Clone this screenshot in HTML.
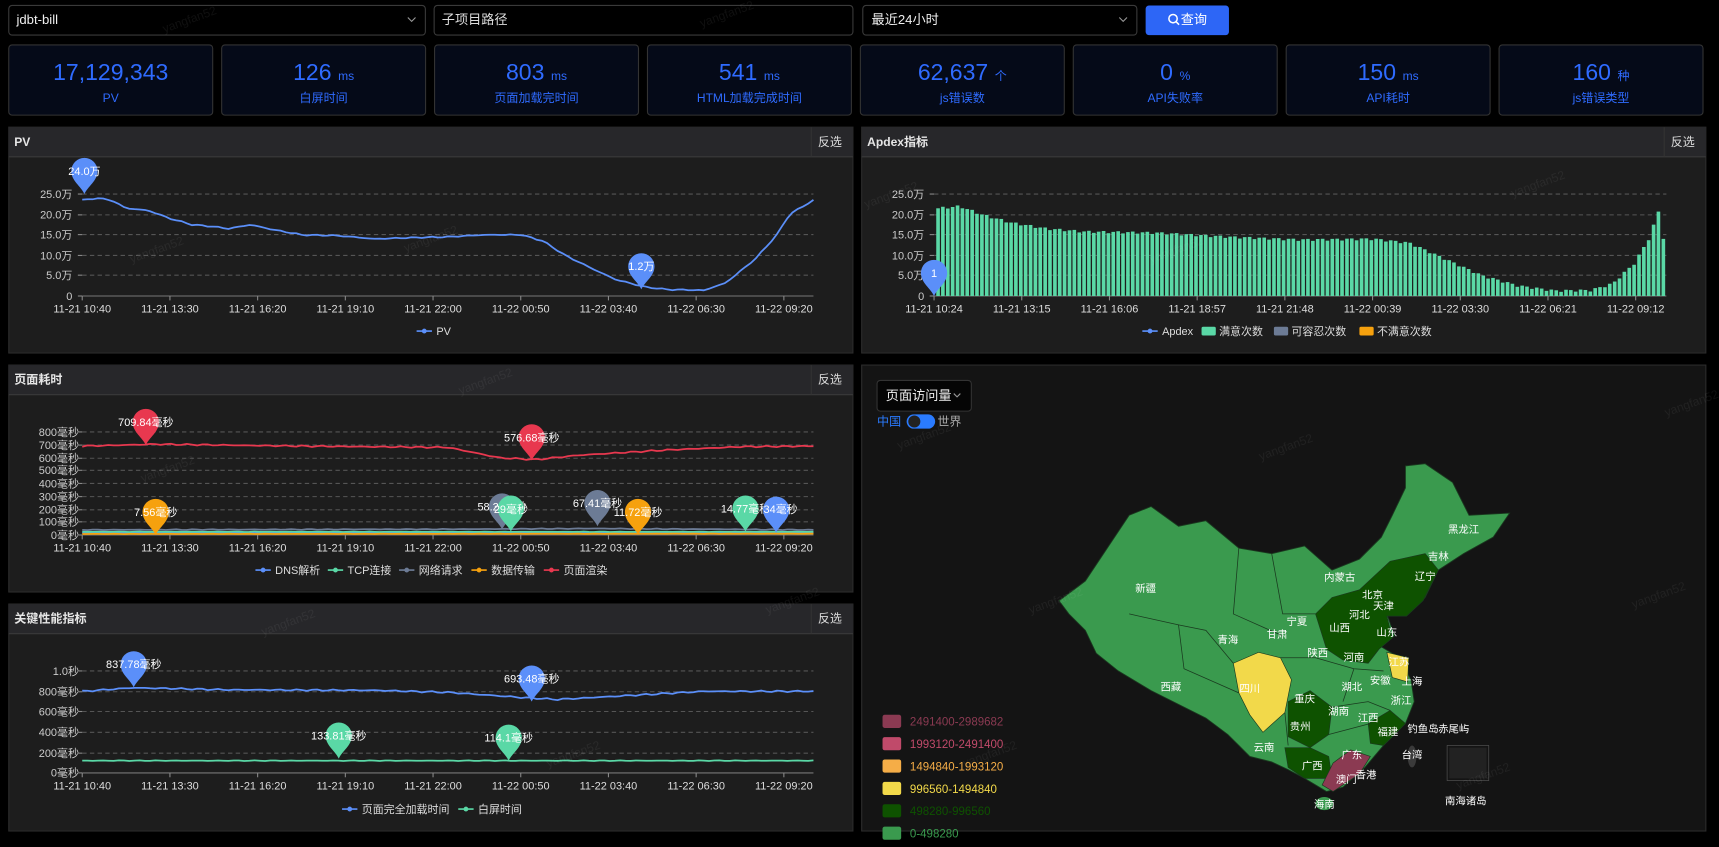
<!DOCTYPE html>
<html><head><meta charset="utf-8"><style>
html,body{margin:0;padding:0;background:#000;width:1719px;height:847px;overflow:hidden}
svg{display:block;font-family:"Liberation Sans","Noto Sans CJK SC",sans-serif}
</style></head><body>
<svg id="s" width="1719" height="847" viewBox="0 0 1568 772.6" xmlns="http://www.w3.org/2000/svg">
<rect width="1568" height="773" fill="#000"/>
<rect x="8" y="5" width="380" height="27" rx="3" fill="#000" stroke="#3a3a3a"/>
<text x="15" y="22" font-size="12" fill="#eee">jdbt-bill</text>
<path d="M372 16l3.5 3.5 3.5-3.5" stroke="#999" fill="none"/>
<rect x="396" y="5" width="382" height="27" rx="3" fill="#000" stroke="#3a3a3a"/>
<text x="403" y="22" font-size="12" fill="#ddd">子项目路径</text>
<rect x="787" y="5" width="250" height="27" rx="3" fill="#000" stroke="#3a3a3a"/>
<text x="795" y="22" font-size="12" fill="#eee">最近24小时</text>
<path d="M1021 16l3.5 3.5 3.5-3.5" stroke="#999" fill="none"/>
<rect x="1045" y="5" width="76" height="27" rx="3" fill="#2d66f6"/>
<circle cx="1070" cy="17" r="3.8" stroke="#fff" stroke-width="1.4" fill="none"/>
<path d="M1073 20l2.5 2.5" stroke="#fff" stroke-width="1.4"/>
<text x="1077" y="22" font-size="12" fill="#fff">查询</text>
<g id="cards"></g>
<g id="panels"></g>
<g id="charts"></g>
<g id="map"></g>
<g id="wm" font-size="11" fill="#ffffff" fill-opacity="0.06"></g>
</svg>
<script>
const NS="http://www.w3.org/2000/svg";
function el(p,tag,a,txt){const e=document.createElementNS(NS,tag);for(const k in a)e.setAttribute(k,a[k]);if(txt!=null)e.textContent=txt;document.getElementById(p).appendChild(e);return e;}
const cards=[["17,129,343","","PV"],["126","ms","白屏时间"],["803","ms","页面加载完时间"],["541","ms","HTML加载完成时间"],["62,637","个","js错误数"],["0","%","API失败率"],["150","ms","API耗时"],["160","种","js错误类型"]];
cards.forEach((c,i)=>{const x=8+i*194.2;el("cards","rect",{x:x,y:41,width:186,height:64,rx:3,fill:"#050a18",stroke:"#333"});
const t=el("cards","text",{x:x+93,y:73,"text-anchor":"middle",fill:"#2f6bff","font-size":21});
t.innerHTML=c[0]+(c[1]?'<tspan font-size="11" dx="6">'+c[1]+'</tspan>':'');
el("cards","text",{x:x+93,y:93,"text-anchor":"middle",fill:"#2f6bff","font-size":11},c[2]);});
function panel(x,y,w,h,title){el("panels","rect",{x:x,y:y,width:w,height:h,fill:"#1d1d1d",stroke:"#2c2c2c"});
el("panels","rect",{x:x,y:y,width:w,height:27,fill:"#27272a"});
el("panels","line",{x1:x,x2:x+w,y1:y+27,y2:y+27,stroke:"#3a3a3a"});
el("panels","line",{x1:x+w-38,x2:x+w-38,y1:y,y2:y+27,stroke:"#333"});
el("panels","text",{x:x+5,y:y+17,"font-size":11,"font-weight":"bold",fill:"#e6e6e6"},title);
el("panels","text",{x:x+w-32,y:y+17,"font-size":11,fill:"#ddd"},"反选");}
panel(8,116,770,206,"PV");panel(786,116,770,206,"Apdex指标");panel(8,333,770,207,"页面耗时");panel(8,551,770,207,"关键性能指标");
el("panels","rect",{x:786,y:333,width:770,height:425,fill:"#141414",stroke:"#2c2c2c"});
function interp(k,t){for(let i=0;i<k.length-1;i++){if(t<=k[i+1][0]){const a=k[i],b=k[i+1];return a[1]+(b[1]-a[1])*(t-a[0])/(b[0]-a[0]);}}return k[k.length-1][1];}
function grid(x0,x1,ys,labels,lx){ys.forEach((y,i)=>{if(i<ys.length-1)el("charts","line",{x1:x0,x2:x1,y1:y,y2:y,stroke:"#555","stroke-dasharray":"4 3"});
el("charts","text",{x:lx,y:y+3.5,"text-anchor":"end","font-size":10,fill:"#ccc"},labels[i]);
el("charts","line",{x1:x0-4,x2:x0,y1:y,y2:y,stroke:"#888"});});
el("charts","line",{x1:x0,x2:x1,y1:ys[ys.length-1],y2:ys[ys.length-1],stroke:"#777"});}
function xlabels(x0,y,labs){labs.forEach((l,i)=>{const x=x0+i*80;el("charts","line",{x1:x,x2:x,y1:y-15,y2:y-11,stroke:"#888"});el("charts","text",{x:x,y:y,"text-anchor":"middle","font-size":10,fill:"#ddd"},l);});}
function line(x0,x1,y0,scale,keys,color,noise,seed){let d="";const n=140;for(let i=0;i<=n;i++){const t=i/n;let v=interp(keys,t)+noise*(Math.sin(i*1.7+seed)*0.6+Math.sin(i*4.3+seed*2)*0.4);const x=x0+t*(x1-x0),y=y0-v*scale;d+=(i?"L":"M")+x.toFixed(1)+" "+y.toFixed(1);}
el("charts","path",{d:d,fill:"none",stroke:color,"stroke-width":1.6});}
function pin(cx,cy,color,label){const d=`M${cx} ${cy}C${cx-3} ${cy-7} ${cx-12} ${cy-12} ${cx-12} ${cy-21}A12 12 0 1 1 ${cx+12} ${cy-21}C${cx+12} ${cy-12} ${cx+3} ${cy-7} ${cx} ${cy}Z`;
el("charts","path",{d:d,fill:color});el("charts","text",{x:cx,y:cy-21+3.5,"text-anchor":"middle","font-size":10,fill:"#fff"},label);}
function legend(items,y){items.forEach(([x,c,txt,bar])=>{if(bar)el("charts","rect",{x:x-14,y:y-4,width:13,height:8,rx:1.5,fill:c});else{el("charts","line",{x1:x-16,x2:x-2,y1:y,y2:y,stroke:c,"stroke-width":1.5});el("charts","circle",{cx:x-9,cy:y,r:2.2,fill:c});}
el("charts","text",{x:x+2,y:y+3.5,"font-size":10,fill:"#ddd"},txt);});}
const xl1=["11-21 10:40","11-21 13:30","11-21 16:20","11-21 19:10","11-21 22:00","11-22 00:50","11-22 03:40","11-22 06:30","11-22 09:20"];
const pvk=[[0,23.5],[.02,24],[.04,23.5],[.06,21.5],[.09,21],[.12,19],[.15,17.5],[.18,17],[.2,16.5],[.23,17.5],[.26,16.3],[.3,15],[.35,14.8],[.4,14],[.45,14.3],[.5,14.5],[.55,15],[.6,15],[.63,13.5],[.66,10],[.7,6.5],[.73,4],[.77,2.2],[.8,1.6],[.85,1.4],[.88,3.2],[.92,9],[.95,15],[.967,20],[1,23.5]];
grid(75,742,[177,196,214,233,251,270],["25.0万","20.0万","15.0万","10.0万","5.0万","0"],66);
xlabels(75,285,xl1);
line(75,742,270,93/25,pvk,"#5b8ff9",0.15,1);
pin(77,177,"#5b8ff9","24.0万");pin(585,264,"#5b8ff9","1.2万");
legend([[396,"#5b8ff9","PV"]],302);
grid(852,1520,[177,196,214,233,251,270],["25.0万","20.0万","15.0万","10.0万","5.0万","0"],843);
xlabels(852,285,["11-21 10:24","11-21 13:15","11-21 16:06","11-21 18:57","11-21 21:48","11-22 00:39","11-22 03:30","11-22 06:21","11-22 09:12"]);
const apk=[[0,21.5],[.03,22],[.06,20],[.1,18],[.15,16.5],[.2,15.8],[.3,15.5],[.4,14.5],[.5,13.8],[.6,14],[.65,13],[.7,9],[.75,5],[.8,2.5],[.85,1.3],[.9,1.4],[.93,3],[.96,8],[.98,14],[.995,21.5],[1,21.5]];
const nb=150;for(let i=0;i<nb;i++){const t=i/(nb-1);let v=interp(apk,t)+0.3*Math.sin(i*2.1);if(i==nb-1)v=14;const h=v*93/25;el("charts","rect",{x:(854+i*4.44).toFixed(1),y:(270-h).toFixed(1),width:3.3,height:h.toFixed(1),fill:"#5ad8a6"});}
pin(852,270,"#5b8ff9","1");
legend([[1058,"#5b8ff9","Apdex"],[1110,"#5ad8a6","满意次数",1],[1176,"#6c7b95","可容忍次数",1],[1254,"#f6a10e","不满意次数",1]],302);
const ys2=[394,406,418,429,441,453,465,476,488];
grid(75,742,ys2,["800毫秒","700毫秒","600毫秒","500毫秒","400毫秒","300毫秒","200毫秒","100毫秒","0毫秒"],72);
xlabels(75,503,xl1);
const sc2=94/800;
line(75,742,488,sc2,[[0,15],[1,15]],"#5b8ff9",2,1);
line(75,742,488,sc2,[[0,25],[1,25]],"#5ad8a6",2,2);
line(75,742,488,sc2,[[0,40],[.5,45],[.7,50],[1,40]],"#6c7b95",3,3);
line(75,742,488,sc2,[[0,8],[1,10]],"#f6a10e",1,4);
line(75,742,488,sc2,[[0,690],[.1,705],[.3,690],[.5,680],[.57,600],[.62,585],[.68,620],[.8,660],[.9,685],[1,690]],"#e8384f",6,5);
pin(133,406,"#e8384f","709.84毫秒");pin(485,420,"#e8384f","576.68毫秒");
pin(142,488,"#f6a10e","7.56毫秒");pin(458,483,"#6c7b95","58.29毫秒");pin(466,485,"#5ad8a6","");pin(545,480,"#6c7b95","67.41毫秒");pin(582,488,"#f6a10e","11.72毫秒");pin(680,485,"#5ad8a6","14.77毫秒");pin(708,486,"#5b8ff9","");
el("charts","text",{x:466,y:468,"text-anchor":"middle","font-size":10,fill:"#fff"},"29毫秒");
el("charts","text",{x:712,y:468,"text-anchor":"middle","font-size":10,fill:"#fff"},"34毫秒");
legend([[249,"#5b8ff9","DNS解析"],[315,"#5ad8a6","TCP连接"],[380,"#6c7b95","网络请求"],[446,"#f6a10e","数据传输"],[512,"#e8384f","页面渲染"]],520);
grid(75,742,[612,631,649,668,687,705],["1.0秒","800毫秒","600毫秒","400毫秒","200毫秒","0毫秒"],72);
xlabels(75,720,xl1);
const sc3=93/1000;
line(75,742,705,sc3,[[0,800],[.07,835],[.2,815],[.4,810],[.5,790],[.6,740],[.65,720],[.75,760],[.85,800],[1,800]],"#5b8ff9",8,1);
line(75,742,705,sc3,[[0,120],[1,120]],"#5ad8a6",3,2);
pin(122,627,"#5b8ff9","837.78毫秒");pin(485,640,"#5b8ff9","693.48毫秒");pin(309,692,"#5ad8a6","133.81毫秒");pin(464,694,"#5ad8a6","114.1毫秒");
legend([[328,"#5b8ff9","页面完全加载时间"],[434,"#5ad8a6","白屏时间"]],738);
el("map","rect",{x:800,y:347,width:86,height:28,rx:3,fill:"#050505",stroke:"#333"});
el("map","text",{x:808,y:365,"font-size":12,fill:"#eee"},"页面访问量");
el("map","path",{d:"M870 359l3 3 3-3",stroke:"#999",fill:"none"});
el("map","text",{x:800,y:388,"font-size":11,fill:"#2a7bff"},"中国");
el("map","rect",{x:827,y:378,width:26,height:13,rx:6.5,fill:"#2a7bff"});
el("map","circle",{cx:834,cy:384.5,r:5.5,fill:"#222"});
el("map","text",{x:855,y:388,"font-size":11,fill:"#aaa"},"世界");
[["#8b3a52","2491400-2989682"],["#c04a6a","1993120-2491400"],["#f5ad47","1494840-1993120"],["#f2d94a","996560-1494840"],["#0e5200","498280-996560"],["#3a9a4e","0-498280"]].forEach((l,i)=>{const y=658+i*20.4;el("map","rect",{x:805,y:y-6,width:17,height:12,rx:2,fill:l[0]});el("map","text",{x:830,y:y+4,"font-size":10.5,fill:l[0]},l[1]);});
const outline="M966 548L990 530L1010 500L1030 470L1050 462L1075 480L1100 475L1130 500L1160 505L1190 498L1215 520L1240 510L1260 490L1270 470L1282 445L1282 425L1300 423L1325 440L1340 470L1377 468L1362 490L1335 505L1312 520L1300 545L1285 560L1265 560L1272 580L1260 590L1277 600L1287 620L1290 640L1282 660L1262 680L1245 700L1225 718L1210 722L1190 710L1175 702L1160 695L1140 690L1130 680L1120 670L1100 655L1080 645L1050 630L1020 612L1000 596L990 575L975 560Z";
el("map","path",{d:outline,fill:"#3a9a4e",stroke:"#1a3a1f","stroke-width":0.8});
el("map","path",{d:"M1200 560L1215 545L1240 538L1268 512L1300 505L1312 520L1298 548L1283 562L1265 562L1270 582L1258 592L1248 605L1225 602L1210 592Z",fill:"#0e5200",stroke:"#1a3a1f","stroke-width":0.6});
el("map","path",{d:"M1175 640L1195 630L1215 645L1212 670L1195 682L1175 672Z",fill:"#0e5200",stroke:"#1a3a1f","stroke-width":0.6});
el("map","path",{d:"M1172 682L1195 682L1212 690L1215 710L1190 710L1175 700Z",fill:"#0e5200",stroke:"#1a3a1f","stroke-width":0.6});
el("map","path",{d:"M1248 660L1268 648L1282 660L1262 680L1250 678Z",fill:"#0e5200",stroke:"#1a3a1f","stroke-width":0.6});
el("map","path",{d:"M1125 605L1148 595L1168 600L1178 620L1172 650L1152 668L1140 652L1130 632Z",fill:"#f2d94a",stroke:"#1a3a1f","stroke-width":0.6});
el("map","path",{d:"M1265 595L1285 600L1284 622L1270 618Z",fill:"#f2d94a",stroke:"#1a3a1f","stroke-width":0.6});
el("map","path",{d:"M1206 716L1216 696L1232 684L1250 690L1240 706L1216 722Z",fill:"#8b3a52",stroke:"#1a3a1f","stroke-width":0.6});
["M1030 560L1075 570L1100 575L1125 605","M1075 570L1080 610L1130 632","M1160 505L1170 560L1200 560","M1130 500L1125 560L1170 580","M1168 600L1200 600L1235 610L1262 612","M1212 670L1250 660","M1172 650L1175 680","M1215 645L1248 640L1268 648","M1235 610L1225 640"].forEach(d=>el("map","path",{d:d,fill:"none",stroke:"#1a3a1f","stroke-width":0.7}));
el("map","ellipse",{cx:1208,cy:733,rx:8,ry:6,fill:"#3a9a4e"});
el("map","ellipse",{cx:1288,cy:690,rx:4,ry:10,fill:"#3a3a3a"});
el("map","rect",{x:1320,y:680,width:38,height:32,fill:"none",stroke:"#555","stroke-width":0.6});
el("map","path",{d:"M1322 682L1356 682L1356 710L1322 710",fill:"#222"});
[["黑龙江",1335,486],["吉林",1312,511],["辽宁",1300,529],["内蒙古",1222,530],["北京",1252,546],["天津",1262,556],["河北",1240,564],["宁夏",1183,570],["山西",1222,576],["山东",1265,580],["新疆",1045,540],["青海",1120,587],["甘肃",1165,582],["陕西",1202,599],["河南",1235,603],["江苏",1276,607],["上海",1288,625],["西藏",1068,630],["四川",1140,631],["湖北",1233,630],["安徽",1259,624],["重庆",1190,641],["浙江",1278,642],["湖南",1221,652],["江西",1248,658],["贵州",1186,666],["福建",1266,671],["钓鱼岛",1298,668],["赤尾屿",1326,668],["云南",1153,685],["台湾",1288,692],["广西",1197,702],["广东",1233,692],["澳门",1228,714],["香港",1246,710],["海南",1208,737],["南海诸岛",1337,734]].forEach(l=>el("map","text",{x:l[1],y:l[2],"text-anchor":"middle","font-size":9.5,fill:"#fff"},l[0]));
[[150,30],[640,25],[370,230],[790,190],[1380,180],[130,440],[420,360],[820,410],[1150,420],[1520,380],[240,580],[700,560],[940,560],[1490,555],[500,700],[880,700],[1330,720],[1050,240],[120,240]].forEach(([x,y])=>el("wm","text",{x:x,y:y,transform:`rotate(-20 ${x} ${y})`},"yangfan52"));
</script>
</body></html>
